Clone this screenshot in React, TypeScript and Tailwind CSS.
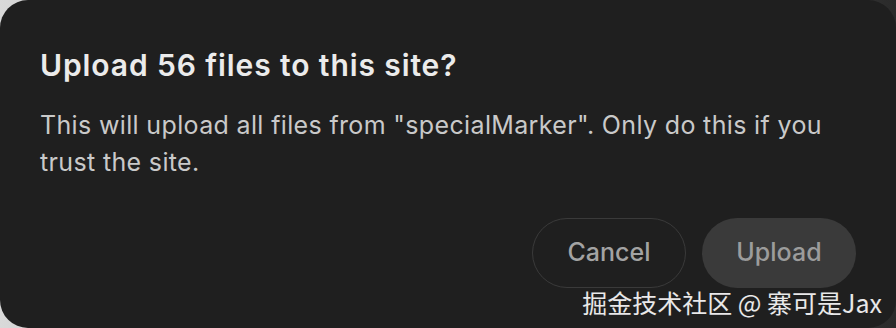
export default function App() {
  return (
    <div className="w-[896px] h-[328px] bg-gradient-to-r from-[#d9d9d9] via-[#8a8a8a] to-[#2a2a2a]">
      <div
        className="relative w-full h-full rounded-[28px] bg-[#1f1f1f] px-10 pt-[47px] flex flex-col"
        style={{ fontFamily: 'Inter, "Noto Sans", sans-serif' }}
      >
        <h1 className="text-[30px] leading-[36px] font-semibold text-[#ebebeb] tracking-[0.9px]">
          Upload 56 files to this site?
        </h1>
        <p className="mt-[24px] text-[25px] leading-[37px] text-[#c9c9c9] tracking-[0.35px] max-w-[800px]">
          This will upload all files from "specialMarker". Only do this if you trust the site.
        </p>
        <div className="mt-[37px] flex justify-end gap-4">
          <button className="w-[154px] h-[70px] rounded-full border border-[#3a3a3a] text-[25px] font-medium text-[#a3a3a3]">
            Cancel
          </button>
          <button className="w-[154px] h-[70px] rounded-full bg-[#3a3a3a] text-[25px] font-medium text-[#9c9c9c]">
            Upload
          </button>
        </div>
        <span
          className="absolute right-[14px] bottom-[13px] text-[25px] leading-none text-white/90"
          style={{ fontFamily: '"Noto Sans CJK SC", "Noto Sans", sans-serif' }}
        >
          掘金技术社区 @ 寨可是Jax
        </span>
      </div>
    </div>
  )
}
